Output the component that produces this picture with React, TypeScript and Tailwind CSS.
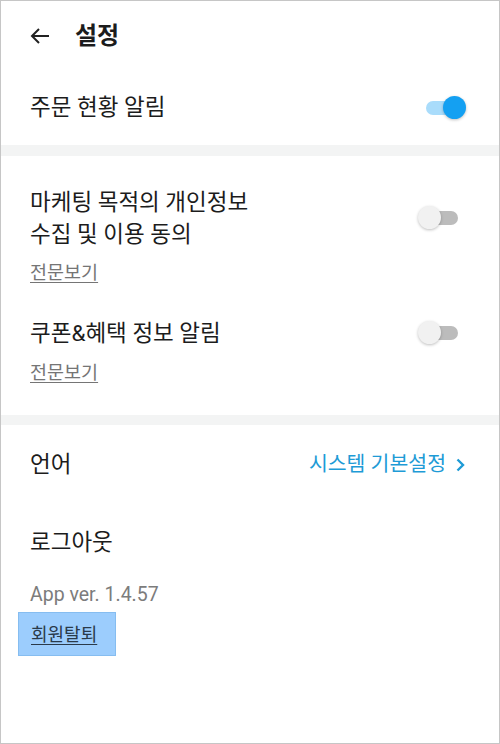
import React, { useState } from 'react'

function Toggle({ on, onClick }: { on: boolean; onClick: () => void }) {
  return (
    <button onClick={onClick} className="relative w-[48px] h-[24px] shrink-0">
      <span
        className={`absolute left-[8px] top-[5px] w-[32px] h-[14px] rounded-full ${on ? 'bg-[#a9dcfb]' : 'bg-[#bcbcbc]'}`}
      />
      <span
        className={`absolute top-0 w-[23px] h-[23px] rounded-full shadow-[0_1px_3px_rgba(0,0,0,0.25)] ${on ? 'right-0 bg-[#14a0f2]' : 'left-0 bg-[#f1f1f1]'}`}
      />
    </button>
  )
}

export default function App() {
  const [order, setOrder] = useState(true)
  const [marketing, setMarketing] = useState(false)
  const [coupon, setCoupon] = useState(false)

  return (
    <div
      className="w-[500px] h-[744px] bg-white border border-[#c6c6c6] text-[#1c1c1c] overflow-hidden"
      style={{ fontFamily: 'Roboto, "Noto Sans CJK KR", sans-serif' }}
    >
      {/* header */}
      <div className="h-[69px] flex items-center pl-[29px]">
        <svg width="20" height="20" viewBox="0 0 20 20" fill="none" stroke="#222" strokeWidth="2">
          <path d="M19 10H2M9 3l-7 7 7 7" />
        </svg>
        <h1 className="ml-[25px] text-[24px] font-bold leading-none">설정</h1>
      </div>

      <div className="h-[75px] flex items-center justify-between pl-[29px] pr-[33px]">
        <span className="text-[22.5px]">주문 현황 알림</span>
        <Toggle on={order} onClick={() => setOrder(!order)} />
      </div>

      <div className="h-[11px] bg-[#f3f4f4]" />

      {/* agreements */}
      <div className="pt-[30px] pb-[30px] pl-[29px] pr-[33px]">
        <div className="flex items-center justify-between">
          <p className="text-[22.5px] leading-[32px]">
            마케팅 목적의 개인정보
            <br />
            수집 및 이용 동의
          </p>
          <Toggle on={marketing} onClick={() => setMarketing(!marketing)} />
        </div>
        <a className="block mt-[11px] text-[18.5px] leading-[24px] text-[#757575] underline underline-offset-[3px] w-fit">
          전문보기
        </a>

        <div className="mt-[32px] flex items-center justify-between">
          <p className="text-[22.5px] leading-[32px]">쿠폰&amp;혜택 정보 알림</p>
          <Toggle on={coupon} onClick={() => setCoupon(!coupon)} />
        </div>
        <a className="block mt-[12px] text-[18.5px] leading-[24px] text-[#757575] underline underline-offset-[3px] w-fit">
          전문보기
        </a>
      </div>

      <div className="h-[10px] bg-[#f3f4f4]" />

      {/* misc */}
      <div className="h-[79px] flex items-center justify-between pl-[29px] pr-[34px]">
        <span className="text-[22.5px]">언어</span>
        <span className="flex items-center gap-[10px] text-[20.5px] text-[#1e9bd6]">
          시스템 기본설정
          <svg width="9" height="14" viewBox="0 0 9 14" fill="none" stroke="#1e9bd6" strokeWidth="2.4">
            <path d="M1.5 1.5L7 7l-5.5 5.5" />
          </svg>
        </span>
      </div>

      <div className="h-[77px] flex items-center pl-[29px]">
        <span className="text-[22.5px]">로그아웃</span>
      </div>

      <div className="pl-[29px] mt-[2px] text-[19.5px] leading-[24px] text-[#7c7c7c]">App ver. 1.4.57</div>

      <div className="ml-[17px] mt-[5px] w-[98px] h-[44px] flex items-center pl-[12px] bg-[#9ccdfd] border border-[#86bdf0]">
        <a className="text-[18px] text-[#2a3a4a] underline underline-offset-[3px]">회원탈퇴</a>
      </div>
    </div>
  )
}
